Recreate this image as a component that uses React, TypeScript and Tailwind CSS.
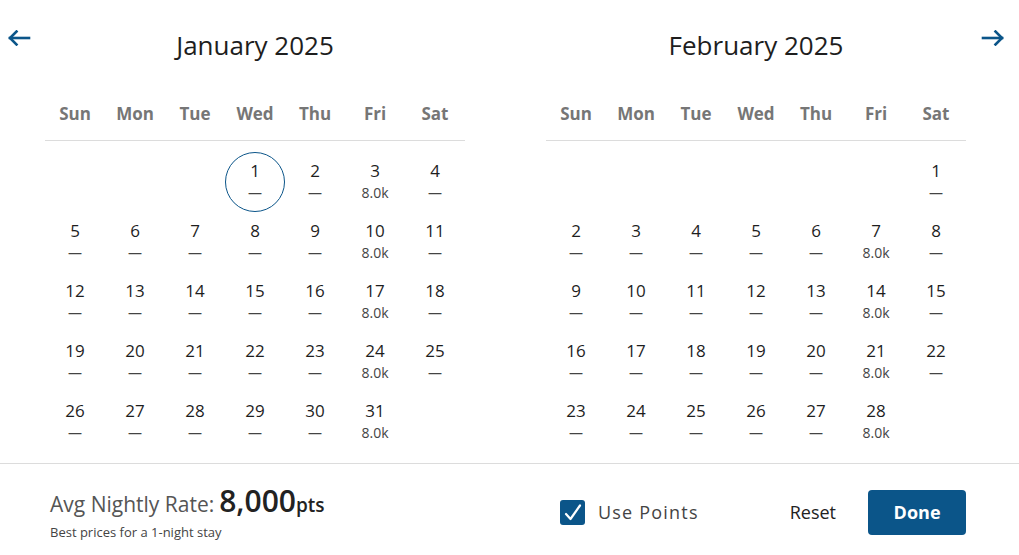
import React from 'react';

const WEEKDAYS = ['Sun', 'Mon', 'Tue', 'Wed', 'Thu', 'Fri', 'Sat'];

type Month = { title: string; offset: number; days: number };

const MONTHS: Month[] = [
  { title: 'January 2025', offset: 3, days: 31 },
  { title: 'February 2025', offset: 6, days: 28 },
];

function Arrow({ dir }: { dir: 'left' | 'right' }) {
  return (
    <svg width="24" height="16" viewBox="0 0 24 16" fill="none" stroke="#0b5589" strokeWidth="2.6" strokeLinecap="square"
      className={dir === 'right' ? 'rotate-180' : ''}>
      <path d="M3 8h19" />
      <path d="M9.5 1.5L3 8l6.5 6.5" />
    </svg>
  );
}

function Calendar({ month }: { month: Month }) {
  const cells: (number | null)[] = [];
  for (let i = 0; i < month.offset; i++) cells.push(null);
  for (let d = 1; d <= month.days; d++) cells.push(d);

  return (
    <div className="w-[420px]">
      <div className="pt-[30px] h-[60px] text-center text-[26px] font-medium leading-[30px] text-[#1e1e1e]">{month.title}</div>
      <div className="mt-[32px] grid grid-cols-7 h-[49px] border-b border-[#dcdcdc]">
        {WEEKDAYS.map((w) => (
          <div key={w} className="text-center text-[17px] font-bold leading-[43px] text-[#767676]">{w}</div>
        ))}
      </div>
      <div className="pt-[11px] grid grid-cols-7">
        {cells.map((d, i) => {
          if (d === null) return <div key={i} className="h-[60px]" />;
          const wday = i % 7;
          const priced = wday === 5;
          const selected = month.offset === 3 && d === 1;
          return (
            <div key={i} className={`h-[60px] flex flex-col items-center ${selected ? 'rounded-full border border-[#0b5589] pt-[7px]' : 'pt-[8px]'}`}>
              <span className="text-[17px] font-medium leading-[22px] text-[#1e1e1e]">{d}</span>
              <span className="mt-[2px] text-[14px] leading-[18px] text-[#444]">{priced ? '8.0k' : '—'}</span>
            </div>
          );
        })}
      </div>
    </div>
  );
}

export default function App() {
  return (
    <div className="w-[1019px] h-[555px] bg-white overflow-hidden" style={{ fontFamily: '"Open Sans", "Noto Sans", sans-serif' }}>
      <div className="flex h-[463px]">
        <div className="w-[45px] pl-[7px] pt-[30px]">
          <Arrow dir="left" />
        </div>
        <Calendar month={MONTHS[0]} />
        <div className="w-[81px]" />
        <Calendar month={MONTHS[1]} />
        <div className="pl-[15px] pt-[30px]">
          <Arrow dir="right" />
        </div>
      </div>
      <div className="border-t border-[#dcdcdc] flex items-start h-[92px] pl-[50px]">
        <div className="w-[510px] flex flex-col pt-[22px]">
          <div className="flex items-baseline text-[#555]">
            <span className="text-[21px] leading-[30px]">Avg Nightly Rate:</span>
            <span className="ml-[5px] text-[30px] font-semibold text-[#222] leading-[30px]">8,000</span>
            <span className="text-[19px] font-semibold text-[#222]">pts</span>
          </div>
          <div className="mt-[3px] text-[13px] leading-[18px] text-[#444]">Best prices for a 1-night stay</div>
        </div>
        <div className="mt-[35px] flex items-center gap-[13px]">
          <div className="w-[25px] h-[25px] rounded-[3px] bg-[#0b5589] flex items-center justify-center">
            <svg width="20" height="20" viewBox="0 0 20 20" fill="none" stroke="white" strokeWidth="2.2" strokeLinecap="round" strokeLinejoin="round">
              <path d="M3 11l4.5 5L17 2.5" />
            </svg>
          </div>
          <span className="text-[18px] tracking-[1.2px] text-[#444]">Use Points</span>
        </div>
        <button className="mt-[36px] ml-[91px] text-[18px] leading-[24px] text-[#222]">Reset</button>
        <button className="mt-[26px] ml-[32px] w-[98px] h-[45px] rounded-[4px] bg-[#0b5589] text-white text-[18px] font-bold">Done</button>
      </div>
    </div>
  );
}
